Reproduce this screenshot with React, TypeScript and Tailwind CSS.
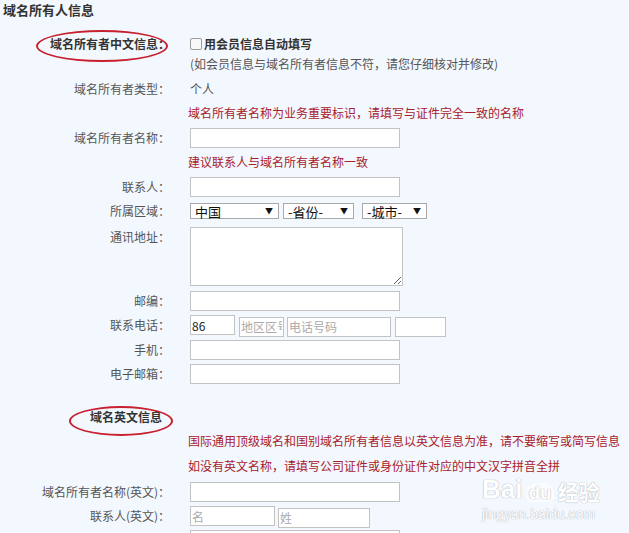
import React from 'react'

const font = { fontFamily: '"Noto Sans CJK SC", "Noto Sans", sans-serif' }

function Label({ children, bold }: { children: React.ReactNode; bold?: boolean }) {
  return (
    <div className={`w-[170px] shrink-0 text-right text-[12px] leading-none ${bold ? 'font-bold text-[#333]' : 'text-[#555]'}`}>
      {children}
    </div>
  )
}

function Row({ label, children, className = '' }: { label?: string; children?: React.ReactNode; className?: string }) {
  return (
    <div className={`flex items-center ${className}`}>
      <Label>{label}</Label>
      <div className="ml-[20px] flex items-center">{children}</div>
    </div>
  )
}

function Input({ w = 'w-[210px]', placeholder = '', value }: { w?: string; placeholder?: string; value?: string }) {
  return (
    <input
      className={`${w} h-[20px] border border-[#c3c3c3] bg-white px-[1px] text-[12px] text-[#222] outline-none placeholder:text-[#aaa]`}
      style={font}
      placeholder={placeholder}
      defaultValue={value}
    />
  )
}

function Select({ w, text }: { w: string; text: string }) {
  return (
    <div className={`${w} h-[16px] border border-[#a9a9a9] bg-white flex items-center justify-between pl-[4px] pr-[5px] text-[13px] leading-none text-[#111]`}>
      <span>{text}</span>
      <span className="text-[8px]">▼</span>
    </div>
  )
}

function Red({ children, className = '' }: { children: React.ReactNode; className?: string }) {
  return (
    <div className={`flex items-center pl-[188px] text-[12px] leading-none text-[#a8202c] ${className}`}>{children}</div>
  )
}

export default function App() {
  return (
    <div className="relative w-[629px] h-[533px] overflow-hidden bg-[#f3f8fe]" style={font}>
      <div className="h-[20px] pl-[3px] flex items-center text-[13px] font-bold text-[#333]">域名所有人信息</div>

      <div className="mt-[12px] h-[24px] flex items-center">
        <Label bold>域名所有者中文信息：</Label>
        <div className="ml-[20px] flex items-center">
          <span className="w-[12px] h-[12px] border border-[#9a9a9a] rounded-[2px] bg-[#f8f8f8]" />
          <span className="ml-[2px] text-[12px] font-bold text-[#333]">用会员信息自动填写</span>
        </div>
      </div>
      <div className="h-[16px] pl-[190px] flex items-center text-[12px] text-[#555]">
        (如会员信息与域名所有者信息不符，请您仔细核对并修改)
      </div>

      <Row label="域名所有者类型：" className="mt-[5px] h-[24px]">
        <span className="text-[12px] text-[#555]">个人</span>
      </Row>
      <Red className="h-[24px]">域名所有者名称为业务重要标识，请填写与证件完全一致的名称</Red>

      <Row label="域名所有者名称：" className="mt-[3px] h-[20px]">
        <Input />
      </Row>
      <Red className="mt-[2px] h-[24px]">建议联系人与域名所有者名称一致</Red>

      <Row label="联系人：" className="mt-[3px] h-[20px]">
        <Input />
      </Row>

      <Row label="所属区域：" className="mt-[6px] h-[16px]">
        <Select w="w-[89px]" text="中国" />
        <div className="ml-[4px]">
          <Select w="w-[71px]" text="-省份-" />
        </div>
        <div className="ml-[8px]">
          <Select w="w-[65px]" text="-城市-" />
        </div>
      </Row>

      <div className="mt-[8px] flex items-start">
        <div className="pt-[4px]">
          <Label>通讯地址：</Label>
        </div>
        <textarea className="ml-[20px] block w-[213px] h-[59px] border border-[#c3c3c3] bg-white outline-none" />
      </div>

      <Row label="邮编：" className="mt-[5px] h-[20px]">
        <Input />
      </Row>

      <Row label="联系电话：" className="mt-[4px] h-[20px]">
        <Input w="w-[45px]" value="86" />
        <div className="ml-[4px]">
          <Input w="w-[45px]" placeholder="地区区号" />
        </div>
        <div className="ml-[3px]">
          <Input w="w-[104px]" placeholder="电话号码" />
        </div>
        <div className="ml-[4px]">
          <Input w="w-[51px]" />
        </div>
      </Row>

      <Row label="手机：" className="mt-[5px] h-[20px]">
        <Input />
      </Row>
      <Row label="电子邮箱：" className="mt-[4px] h-[20px]">
        <Input />
      </Row>

      <div className="mt-[20px] h-[26px] flex items-center pl-[90px] text-[12px] font-bold text-[#333]">域名英文信息</div>
      <Red className="h-[22px]">国际通用顶级域名和国别域名所有者信息以英文信息为准，请不要缩写或简写信息</Red>
      <Red className="mt-[3px] h-[22px]">如没有英文名称，请填写公司证件或身份证件对应的中文汉字拼音全拼</Red>

      <Row label="域名所有者名称(英文)：" className="mt-[5px] h-[20px]">
        <Input />
      </Row>
      <Row label="联系人(英文)：" className="mt-[4px] h-[20px]">
        <Input w="w-[85px]" placeholder="名" />
        <div className="ml-[3px]">
          <Input w="w-[92px]" placeholder="姓" />
        </div>
      </Row>
      <Row className="mt-[4px] h-[20px]">
        <Input />
      </Row>

      {/* red annotation ellipses */}
      <div className="absolute left-[36px] top-[30px] w-[132px] h-[32px] rounded-[50%] border-2 border-[#c8202e]" />
      <div className="absolute left-[69px] top-[406px] w-[104px] h-[30px] rounded-[50%] border-2 border-[#c8202e]" />

      {/* watermark */}
      <div className="absolute left-[482px] top-[476px] text-white [text-shadow:0_0_1px_#b0b4bc,0_0_1px_#b0b4bc]">
        <div className="flex items-end leading-none">
          <span className="text-[26px] font-bold" style={{ fontFamily: '"Liberation Sans", sans-serif' }}>Bai</span>
          <span className="ml-[4px] px-[2px] text-[19px] font-bold rounded-t-[10px] rounded-b-[6px] bg-white/60" style={{ fontFamily: '"Liberation Sans", sans-serif' }}>du</span>
          <span className="ml-[4px] text-[21px] font-bold">经验</span>
        </div>
        <div className="mt-[5px] text-[14px] leading-none" style={{ fontFamily: '"Liberation Sans", sans-serif' }}>jingyan.baidu.com</div>
      </div>
    </div>
  )
}
